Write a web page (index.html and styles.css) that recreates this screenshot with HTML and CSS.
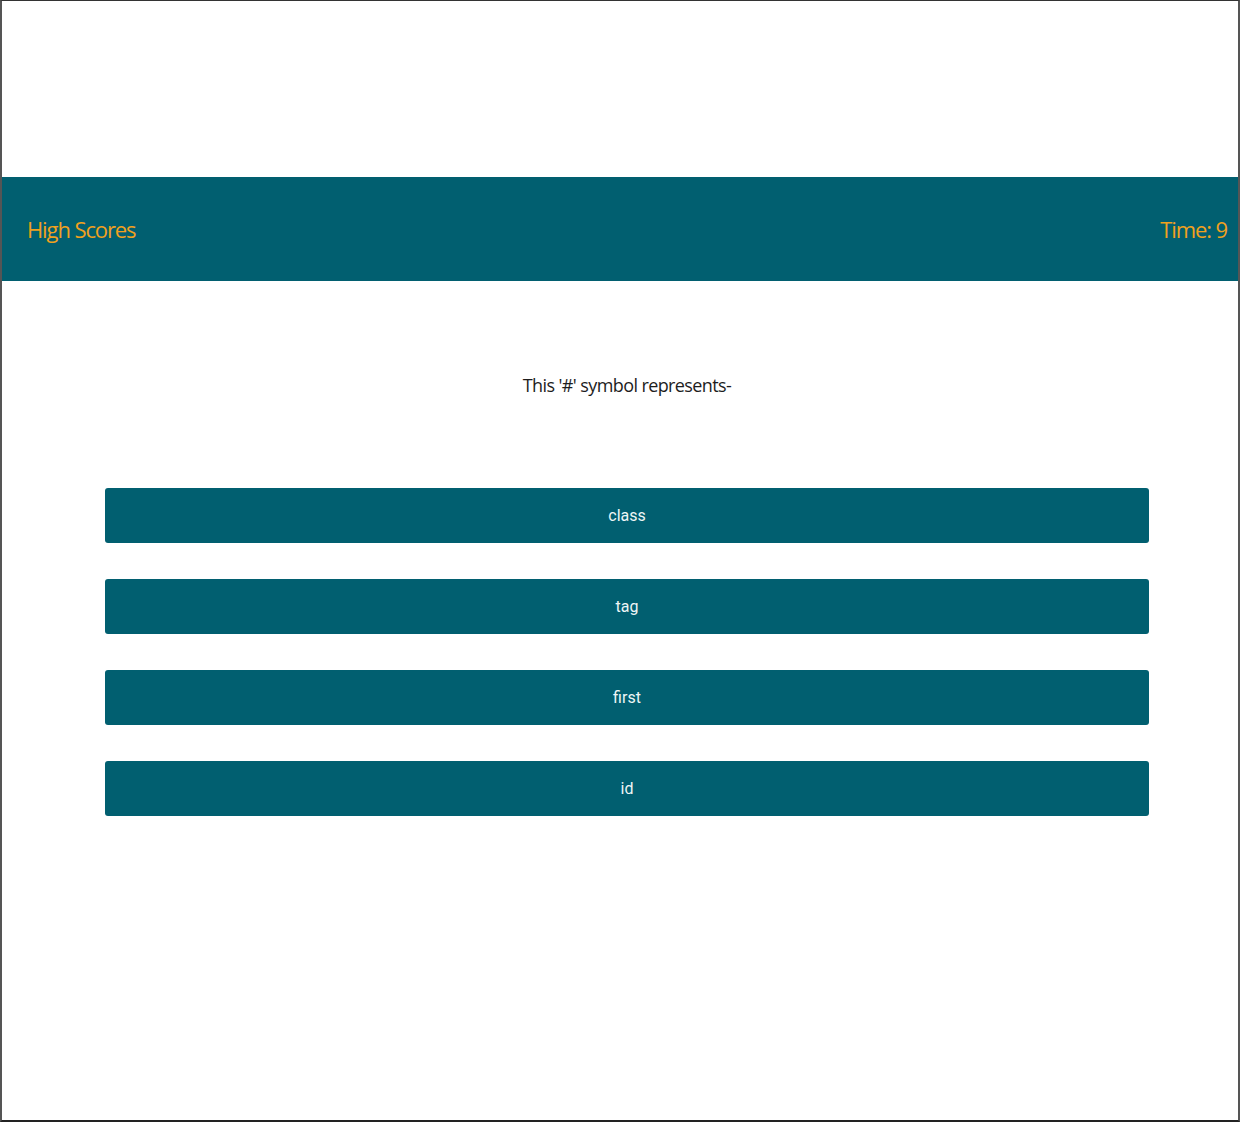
FILE: index.html
```html
<!DOCTYPE html>
<html>
<head>
<meta charset="utf-8">
<link rel="stylesheet" href="styles.css">
</head>
<body>
<div class="frame">
  <header class="topbar">
    <span class="hs">High Scores</span>
    <span class="timer">Time: 9</span>
  </header>
  <main class="quiz">
    <p class="question">This '#' symbol represents-</p>
    <div class="choices">
      <button class="choice">class</button>
      <button class="choice">tag</button>
      <button class="choice">first</button>
      <button class="choice">id</button>
    </div>
  </main>
</div>
</body>
</html>
```
FILE: styles.css
```css
html, body {
  margin: 0;
  padding: 0;
  background: #fff;
}
.frame {
  box-sizing: border-box;
  width: 1240px;
  height: 1122px;
  border: 1px solid #333;
  border-left: 2px solid #555;
  border-right: 2px solid #555;
  border-bottom: 2px solid #222;
  padding-top: 176px;
  font-family: "Open Sans", sans-serif;
}
.topbar {
  height: 104px;
  background: #015f70;
  display: flex;
  align-items: center;
  justify-content: space-between;
  padding: 0 11px 0 25px;
  color: #f0a11e;
  font-family: "Open Sans", sans-serif;
  font-size: 22px;
  letter-spacing: -1.1px;
}
.quiz {
  padding: 0 89px 0 103px;
  display: flex;
  flex-direction: column;
  align-items: stretch;
}
.question {
  margin: 90px 0 0;
  text-align: center;
  font-size: 18px;
  color: #1d1d1d;
  letter-spacing: -0.6px;
  line-height: 28px;
}
.choices {
  margin-top: 89px;
  display: flex;
  flex-direction: column;
  gap: 36px;
}
.choice {
  height: 55px;
  border: none;
  border-radius: 3px;
  background: #015f70;
  color: #eef6f6;
  font-family: Roboto, sans-serif;
  font-size: 16px;
  letter-spacing: 0;
  padding: 0;
}
```
